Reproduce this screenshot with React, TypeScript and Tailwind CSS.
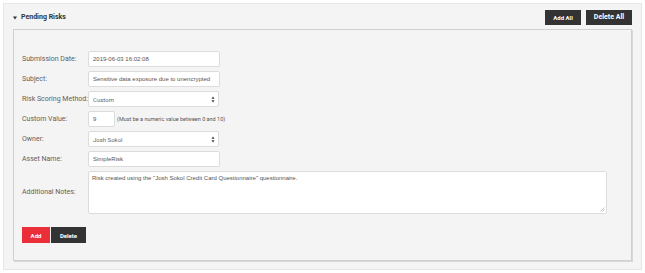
import React from 'react'

const label = "text-[7px] text-[#5f5f5f] font-['Roboto',sans-serif]"
const input =
  "h-4 bg-white border border-[#dcdcdc] rounded-[2px] px-[4px] text-[6px] text-[#555] font-['Liberation_Sans',Arial,sans-serif] flex items-center"

function SelectArrows() {
  return (
    <svg width="4" height="7" viewBox="0 0 4 7" className="ml-auto">
      <path d="M2 0.5 L3.6 2.8 H0.4 Z" fill="#444" />
      <path d="M2 6.5 L3.6 4.2 H0.4 Z" fill="#444" />
    </svg>
  )
}

function Row({ name, children }: { name: string; children: React.ReactNode }) {
  return (
    <div className="flex items-center h-4">
      <div className={`${label} w-[66px] shrink-0`}>{name}</div>
      {children}
    </div>
  )
}

export default function App() {
  return (
    <div className="min-h-screen bg-white p-[3px]">
      <div className="w-[639px] h-[267px] bg-[#f4f4f4] border border-[#e6e6e6] px-[9px]">
        {/* header */}
        <div className="flex items-center h-[25px] pt-[2px]">
          <svg width="4" height="4" viewBox="0 0 4 4" className="mr-[4px]">
            <path d="M0 0.5 H4 L2 3.5 Z" fill="#333" />
          </svg>
          <span className="text-[7px] font-bold text-[#333] font-['Roboto',sans-serif]">Pending Risks</span>
          <div className="ml-auto flex gap-[5px]">
            <button className="h-[15px] w-[36px] bg-[#333] text-white text-[6px] font-bold font-['Roboto',sans-serif]">
              Add All
            </button>
            <button className="h-[15px] w-[46px] bg-[#333] text-white text-[7px] font-bold font-['Roboto',sans-serif]">
              Delete All
            </button>
          </div>
        </div>

        {/* inner panel */}
        <div className="h-[232px] border border-[#d0d0d0] shadow-[1px_1px_0_#d8d8d8] pl-[8px] pt-[21px] flex flex-col gap-[4px]">
          <Row name="Submission Date:">
            <div className={`${input} w-[132px]`}>2019-06-03 16:02:08</div>
          </Row>
          <Row name="Subject:">
            <div className={`${input} w-[132px] overflow-hidden whitespace-nowrap`}>
              Sensitive data exposure due to unencrypted
            </div>
          </Row>
          <Row name="Risk Scoring Method:">
            <div className={`${input} w-[131px] font-['Roboto',sans-serif] text-[#666] pr-[3px]`}>
              Custom
              <SelectArrows />
            </div>
          </Row>
          <Row name="Custom Value:">
            <div className={`${input} w-[27px]`}>9</div>
            <span className="ml-[2px] text-[5.5px] text-[#555] font-['Roboto',sans-serif]">
              (Must be a numeric value between 0 and 10)
            </span>
          </Row>
          <Row name="Owner:">
            <div className={`${input} w-[131px] font-['Roboto',sans-serif] text-[#666] pr-[3px]`}>
              Josh Sokol
              <SelectArrows />
            </div>
          </Row>
          <Row name="Asset Name:">
            <div className={`${input} w-[132px]`}>SimpleRisk</div>
          </Row>
          <div className="flex items-center h-[43px]">
            <div className={`${label} w-[66px] shrink-0`}>Additional Notes:</div>
            <div className="relative w-[519px] h-[43px] bg-white border border-[#dcdcdc] rounded-[2px] px-[3px] pt-[2px] text-[6px] text-[#555] font-['Liberation_Sans',Arial,sans-serif]">
              Risk created using the "Josh Sokol Credit Card Questionnaire" questionnaire.
              <svg width="5" height="5" viewBox="0 0 5 5" className="absolute right-[1px] bottom-[1px]">
                <path d="M4.5 0.5 L0.5 4.5 M4.5 2.5 L2.5 4.5" stroke="#999" strokeWidth="0.6" />
              </svg>
            </div>
          </div>
          <div className="flex gap-[1px] mt-[9px]">
            <button className="h-4 w-[28px] bg-[#ea2f39] text-white text-[6px] font-bold font-['Roboto',sans-serif]">
              Add
            </button>
            <button className="h-4 w-[35px] bg-[#333] text-white text-[6px] font-bold font-['Roboto',sans-serif]">
              Delete
            </button>
          </div>
        </div>
      </div>
    </div>
  )
}
